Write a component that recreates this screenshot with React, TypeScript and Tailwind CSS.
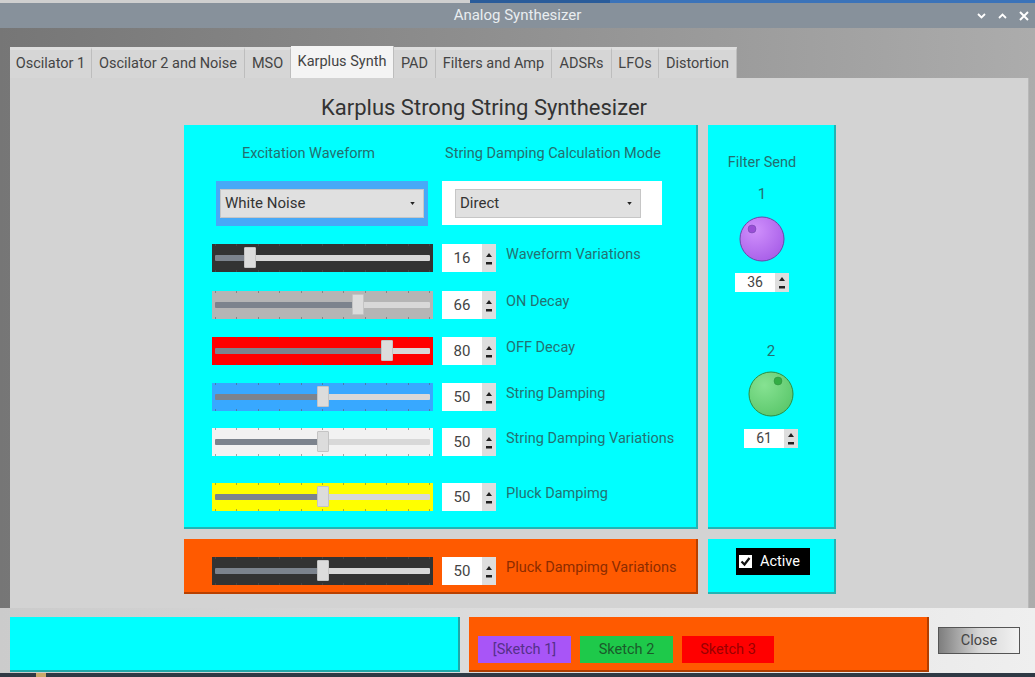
import React from "react";

const font = { fontFamily: "Roboto, 'Noto Sans', sans-serif" };

function Arrows({ h }: { h: number }) {
  return (
    <div className="flex flex-col items-center justify-center bg-[#dedede] w-[14px] gap-[5px]" style={{ height: h }}>
      <svg width="8" height="5" viewBox="0 0 8 5"><path d="M1 5 L4 1 L7 5 Z" fill="#222" /></svg>
      <svg width="8" height="3" viewBox="0 0 8 3"><rect x="1" y="0" width="6" height="2.5" fill="#222" /></svg>
    </div>
  );
}

function Spin({ v, small }: { v: number; small?: boolean }) {
  const h = small ? 19 : 28;
  return (
    <div className="flex shrink-0" style={{ height: h }}>
      <div className={`bg-white w-[40px] flex items-center justify-center text-[#444] ${small ? "text-[14px]" : "text-[15px]"}`}>{v}</div>
      <Arrows h={h} />
    </div>
  );
}

function Slider({ bg, pos, border }: { bg: string; pos: number; border?: string }) {
  const ticks = Array.from({ length: 11 });
  return (
    <div className={`relative w-[221px] h-[28px] shrink-0 ${bg} ${border ?? ""}`}>
      <div className="absolute left-[3px] right-[3px] top-0 flex justify-between">
        {ticks.map((_, i) => (
          <div key={i} className="w-[1px] h-[2px] bg-[#555] opacity-50" />
        ))}
      </div>
      <div className="absolute left-[3px] right-[3px] bottom-0 flex justify-between">
        {ticks.map((_, i) => (
          <div key={i} className="w-[1px] h-[2px] bg-[#555] opacity-50" />
        ))}
      </div>
      <div className="absolute left-[3px] right-[3px] top-[11px] h-[6px] flex rounded-[1px] overflow-hidden">
        <div className="bg-[#7c838d] h-full" style={{ width: pos - 3 }} />
        <div className="bg-[#d8d8d8] h-full flex-1" />
      </div>
      <div
        className="absolute top-[3px] w-[12px] h-[21px] bg-[#dcdcdc] border border-[#c4c4c4] rounded-[1px]"
        style={{ left: pos - 6 }}
      />
    </div>
  );
}

function Row({ bg, pos, v, label, mt, labelColor, border }: { bg: string; pos: number; v: number; label: string; mt: string; labelColor?: string; border?: string }) {
  return (
    <div className={`flex items-start ${mt}`}>
      <Slider bg={bg} pos={pos} border={border} />
      <div className="ml-[9px]"><Spin v={v} /></div>
      <div className={`ml-[10px] text-[14.5px] leading-[20px] pt-[1px] ${labelColor ?? "text-[#237272]"}`}>{label}</div>
    </div>
  );
}

function Combo({ text, w }: { text: string; w: number }) {
  return (
    <div className="h-[29px] bg-[#e0e0e0] border border-[#c6c6c6] flex items-center justify-between pl-[4px] pr-[8px] text-[15px] text-[#333]" style={{ width: w }}>
      <span>{text}</span>
      <svg width="5" height="3" viewBox="0 0 6 4"><path d="M0 0 H6 L3 4 Z" fill="#222" /></svg>
    </div>
  );
}

function Knob({ color, light, dark, border, dot }: { color: string; light: string; dark: string; border: string; dot: [number, number] }) {
  return (
    <svg width="46" height="46" viewBox="0 0 46 46">
      <defs>
        <radialGradient id={`g${color}`} cx="35%" cy="30%" r="75%">
          <stop offset="0%" stopColor={light} />
          <stop offset="100%" stopColor={color} />
        </radialGradient>
      </defs>
      <circle cx="23" cy="23" r="22" fill={`url(#g${color})`} stroke={border} strokeWidth="1" />
      <circle cx={23 + dot[0]} cy={23 + dot[1]} r="4" fill={dark} stroke={border} strokeWidth="0.5" />
    </svg>
  );
}

const tabs: [string, number][] = [
  ["Oscilator 1", 82],
  ["Oscilator 2 and Noise", 153],
  ["MSO", 46],
  ["Karplus Synth", 103],
  ["PAD", 42],
  ["Filters and Amp", 116],
  ["ADSRs", 60],
  ["LFOs", 47],
  ["Distortion", 78],
];

export default function App() {
  return (
    <div className="w-[1035px] h-[677px] overflow-hidden flex flex-col bg-[#aaaaaa]" style={font}>
      {/* desktop strip */}
      <div className="h-[3px] flex shrink-0">
        <div className="w-[470px] bg-[#cfcfcf]" />
        <div className="w-[140px] bg-[#2a5c9a]" />
        <div className="flex-1 bg-[#3b73b9]" />
      </div>
      {/* title bar */}
      <div className="h-[25px] shrink-0 bg-[#87919b] relative flex items-center justify-center">
        <span className="text-[15px] text-[#e9edf0]">Analog Synthesizer</span>
        <div className="absolute right-[6px] top-0 h-full flex items-center gap-[12px] text-white text-[12px] font-bold">
          <svg width="9" height="6" viewBox="0 0 9 6"><path d="M1 1 L4.5 4.5 L8 1" stroke="white" strokeWidth="1.8" fill="none" /></svg>
          <svg width="9" height="6" viewBox="0 0 9 6"><path d="M1 5 L4.5 1.5 L8 5" stroke="white" strokeWidth="1.8" fill="none" /></svg>
          <svg width="10" height="10" viewBox="0 0 10 10"><path d="M1 1 L9 9 M9 1 L1 9" stroke="white" strokeWidth="2" /></svg>
        </div>
      </div>
      {/* window body */}
      <div className="flex-1 flex flex-col bg-gradient-to-r from-[#767676] to-[#acacac]">
        <div className="h-[17px] shrink-0" />
        {/* tabs */}
        <div className="ml-[10px] flex items-end h-[33px] shrink-0">
          {tabs.map(([t, w]) => {
            const sel = t === "Karplus Synth";
            return (
              <div
                key={t}
                className={`flex items-center justify-center text-[14.5px] text-[#444] border-r border-[#bdbdbd] ${sel ? "h-[32px] bg-[#f4f4f4]" : "h-[31px] bg-[#d6d6d6] border-t-[3px] border-t-[#dedede]"}`}
                style={{ width: w }}
              >
                {t}
              </div>
            );
          })}
        </div>
        {/* pane */}
        <div className="ml-[10px] mr-[6px] h-[530px] shrink-0 bg-[#d3d3d3] border-r border-[#b8b8b8] flex flex-col">
          <div className="pt-[16px] pl-[311px] text-[22px] leading-[27px] text-[#333]">Karplus Strong String Synthesizer</div>
          <div className="mt-[4px] ml-[174px] flex gap-[10px]">
            {/* left column */}
            <div className="flex flex-col gap-[10px]">
              <div className="w-[514px] h-[404px] bg-[#00ffff] border-r-2 border-b-2 border-[#22b4b4] pl-[28px] flex flex-col">
                <div className="flex mt-[20px] text-[14.5px] leading-[18px] text-[#236f6f]">
                  <div className="w-[193px] text-center">Excitation Waveform</div>
                  <div className="ml-[33px] w-[230px] text-center">String Damping Calculation Mode</div>
                </div>
                <div className="flex mt-[18px]">
                  <div className="ml-[4px] w-[212px] h-[45px] bg-[#47a9f7] flex items-center justify-center">
                    <Combo text="White Noise" w={204} />
                  </div>
                  <div className="ml-[14px] w-[220px] h-[44px] bg-white flex items-center pl-[13px]">
                    <Combo text="Direct" w={186} />
                  </div>
                </div>
                <Row bg="bg-[#333333]" pos={38} v={16} label="Waveform Variations" mt="mt-[18px]" />
                <Row bg="bg-[#b5b5b5]" pos={146} v={66} label="ON Decay" mt="mt-[19px]" />
                <Row bg="bg-[#ff0000]" pos={175} v={80} label="OFF Decay" mt="mt-[18px]" />
                <Row bg="bg-[#38a8ff]" pos={111} v={50} label="String Damping" mt="mt-[18px]" />
                <Row bg="bg-[#f2f2f2]" pos={111} v={50} label="String Damping Variations" mt="mt-[17px]" />
                <Row bg="bg-[#ffff00]" pos={111} v={50} label="Pluck Dampimg" mt="mt-[27px]" />
              </div>
              <div className="w-[514px] h-[55px] bg-[#ff5a00] border-r-2 border-b-2 border-[#b84000] pl-[28px] pt-[18px]">
                <Row bg="bg-[#333333]" pos={111} v={50} label="Pluck Dampimg Variations" mt="" labelColor="text-[#8c2c00]" />
              </div>
            </div>
            {/* right column */}
            <div className="flex flex-col gap-[10px]">
              <div className="w-[128px] h-[404px] bg-[#00ffff] border-r-2 border-b-2 border-[#22b4b4] flex flex-col items-center">
                <div className="flex flex-col items-center mr-[18px]">
                  <div className="mt-[29px] text-[14.5px] leading-[18px] text-[#236f6f]">Filter Send</div>
                  <div className="mt-[13px] text-[15px] leading-[18px] text-[#236f6f]">1</div>
                  <div className="mt-[13px]">
                    <Knob color="#a85fe8" light="#d090fc" dark="#9a4ed6" border="#6b46a8" dot={[-10, -10]} />
                  </div>
                  <div className="mt-[11px]"><Spin v={36} small /></div>
                </div>
                <div className="flex flex-col items-center">
                  <div className="mt-[50px] text-[15px] leading-[18px] text-[#236f6f]">2</div>
                  <div className="mt-[11px]">
                    <Knob color="#5cc86c" light="#86e292" dark="#32ad45" border="#2f8c40" dot={[7, -13]} />
                  </div>
                  <div className="mt-[12px]"><Spin v={61} small /></div>
                </div>
              </div>
              <div className="w-[128px] h-[55px] bg-[#00ffff] border-r-2 border-b-2 border-[#22b4b4] pl-[28px] pt-[9px]">
                <div className="w-[74px] h-[27px] bg-black flex items-center pl-[3px] gap-[8px]">
                  <div className="w-[13px] h-[13px] bg-white flex items-center justify-center">
                    <svg width="11" height="11" viewBox="0 0 11 11"><path d="M1.5 5.5 L4.5 8.5 L9.5 2" stroke="#111" strokeWidth="2.2" fill="none" /></svg>
                  </div>
                  <span className="text-white text-[14.5px]">Active</span>
                </div>
              </div>
            </div>
          </div>
        </div>
        {/* bottom area */}
        <div className="flex-1 bg-gradient-to-r from-[#cbcbcb] to-[#efefef] flex items-start pt-[9px] pl-[10px]">
          <div className="w-[450px] h-[55px] bg-[#00ffff] border-b-2 border-r-2 border-[#1ea8a8]" />
          <div className="ml-[9px] w-[460px] h-[55px] bg-[#ff5a00] border-b-2 border-r-2 border-[#b03e00] flex items-start pt-[19px] pl-[9px] gap-[9px] text-[14.5px]">
            <div className="w-[93px] h-[27px] bg-[#a855f7] text-[#55308a] flex items-center justify-center">[Sketch 1]</div>
            <div className="w-[93px] h-[27px] bg-[#1ec94a] text-[#1b5a2a] flex items-center justify-center">Sketch 2</div>
            <div className="w-[92px] h-[27px] bg-[#ff0000] text-[#9a0000] flex items-center justify-center">Sketch 3</div>
          </div>
          <div className="ml-[9px] mt-[10px] w-[82px] h-[27px] border border-[#555] bg-gradient-to-r from-[#7e7e7e] via-[#d6d6d6] to-[#f2f2f2] flex items-center justify-center text-[14.5px] text-[#444]">Close</div>
        </div>
        <div className="h-[4px] shrink-0 bg-[#2f3944] flex">
          <div className="ml-[36px] w-[10px] bg-[#c9a86a]" />
        </div>
      </div>
    </div>
  );
}
